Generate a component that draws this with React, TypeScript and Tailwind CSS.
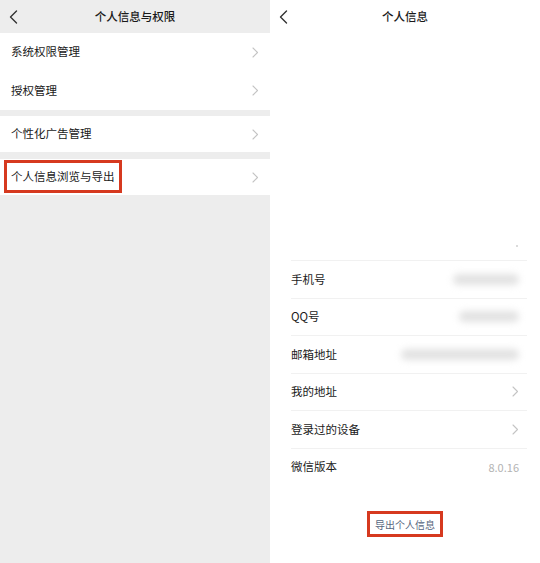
import React from "react";

const font = { fontFamily: '"Noto Sans CJK SC", "Noto Sans", sans-serif' };

function ChevronRight({ className = "" }: { className?: string }) {
  return (
    <svg width="7" height="11" viewBox="0 0 7 11" className={className} fill="none">
      <path d="M1 1l4.5 4.5L1 10" stroke="#c4c4c4" strokeWidth="1.1" strokeLinecap="round" strokeLinejoin="round" />
    </svg>
  );
}

function ChevronLeft() {
  return (
    <svg width="9" height="14" viewBox="0 0 9 14" fill="none">
      <path d="M7.5 1L1.5 7l6 6" stroke="#333" strokeWidth="1.4" strokeLinecap="round" strokeLinejoin="round" />
    </svg>
  );
}

function LeftRow({ label, h, boxed }: { label: string; h: string; boxed?: boolean }) {
  return (
    <div className={`relative flex items-center justify-between bg-white pl-[11px] pr-[11px] ${h}`}>
      <span className="text-[11.5px] text-[#1a1a1a]">{label}</span>
      <ChevronRight />
      {boxed && (
        <div className="absolute left-[4px] top-[1px] h-[33px] w-[118px] border-[3px] border-[#d6391f]" />
      )}
    </div>
  );
}

function Blur({ w }: { w: string }) {
  return <div className={`h-[11px] ${w} rounded-full bg-[#e2e2e2] blur-[3.5px]`} />;
}

function RightRow({ label, right }: { label: string; right: React.ReactNode }) {
  return (
    <div className="ml-[21px] mr-[13px] flex h-[37.5px] items-center justify-between border-t border-[#f1f1f1] pr-[8px]">
      <span className="text-[11.5px] text-[#1a1a1a]">{label}</span>
      {right}
    </div>
  );
}

export default function App() {
  return (
    <div className="flex h-[563px] w-[540px] overflow-hidden bg-white" style={font}>
      {/* Left panel */}
      <div className="flex h-full w-[270px] flex-col bg-[#ededed]">
        <div className="relative flex h-[33px] items-center justify-center">
          <div className="absolute left-[9px] top-[10px]">
            <ChevronLeft />
          </div>
          <span className="text-[11.5px] font-medium text-[#1a1a1a]">个人信息与权限</span>
        </div>
        <LeftRow label="系统权限管理" h="h-[38px]" />
        <LeftRow label="授权管理" h="h-[39px]" />
        <div className="h-[6px]" />
        <LeftRow label="个性化广告管理" h="h-[36px]" />
        <div className="h-[7px]" />
        <LeftRow label="个人信息浏览与导出" h="h-[36px]" boxed />
      </div>

      {/* Right panel */}
      <div className="flex h-full w-[270px] flex-col bg-white">
        <div className="relative flex h-[33px] items-center justify-center">
          <div className="absolute left-[9px] top-[10px]">
            <ChevronLeft />
          </div>
          <span className="text-[11.5px] font-medium text-[#1a1a1a]">个人信息</span>
        </div>
        <div className="relative h-[227px]">
          <div className="absolute right-[22px] bottom-[13px] h-[2px] w-[2px] rounded-full bg-[#cfcfcf]" />
        </div>
        <RightRow label="手机号" right={<Blur w="w-[66px]" />} />
        <RightRow label="QQ号" right={<Blur w="w-[60px]" />} />
        <RightRow label="邮箱地址" right={<Blur w="w-[118px]" />} />
        <RightRow label="我的地址" right={<ChevronRight />} />
        <RightRow label="登录过的设备" right={<ChevronRight />} />
        <RightRow label="微信版本" right={<span className="text-[11px] text-[#b3b3b3]">8.0.16</span>} />
        <div className="flex justify-center pt-[26px]">
          <div className="flex h-[26px] w-[76px] items-center justify-center border-[3px] border-[#d6391f] bg-white">
            <span className="text-[10px] text-[#56657d]">导出个人信息</span>
          </div>
        </div>
      </div>
    </div>
  );
}
